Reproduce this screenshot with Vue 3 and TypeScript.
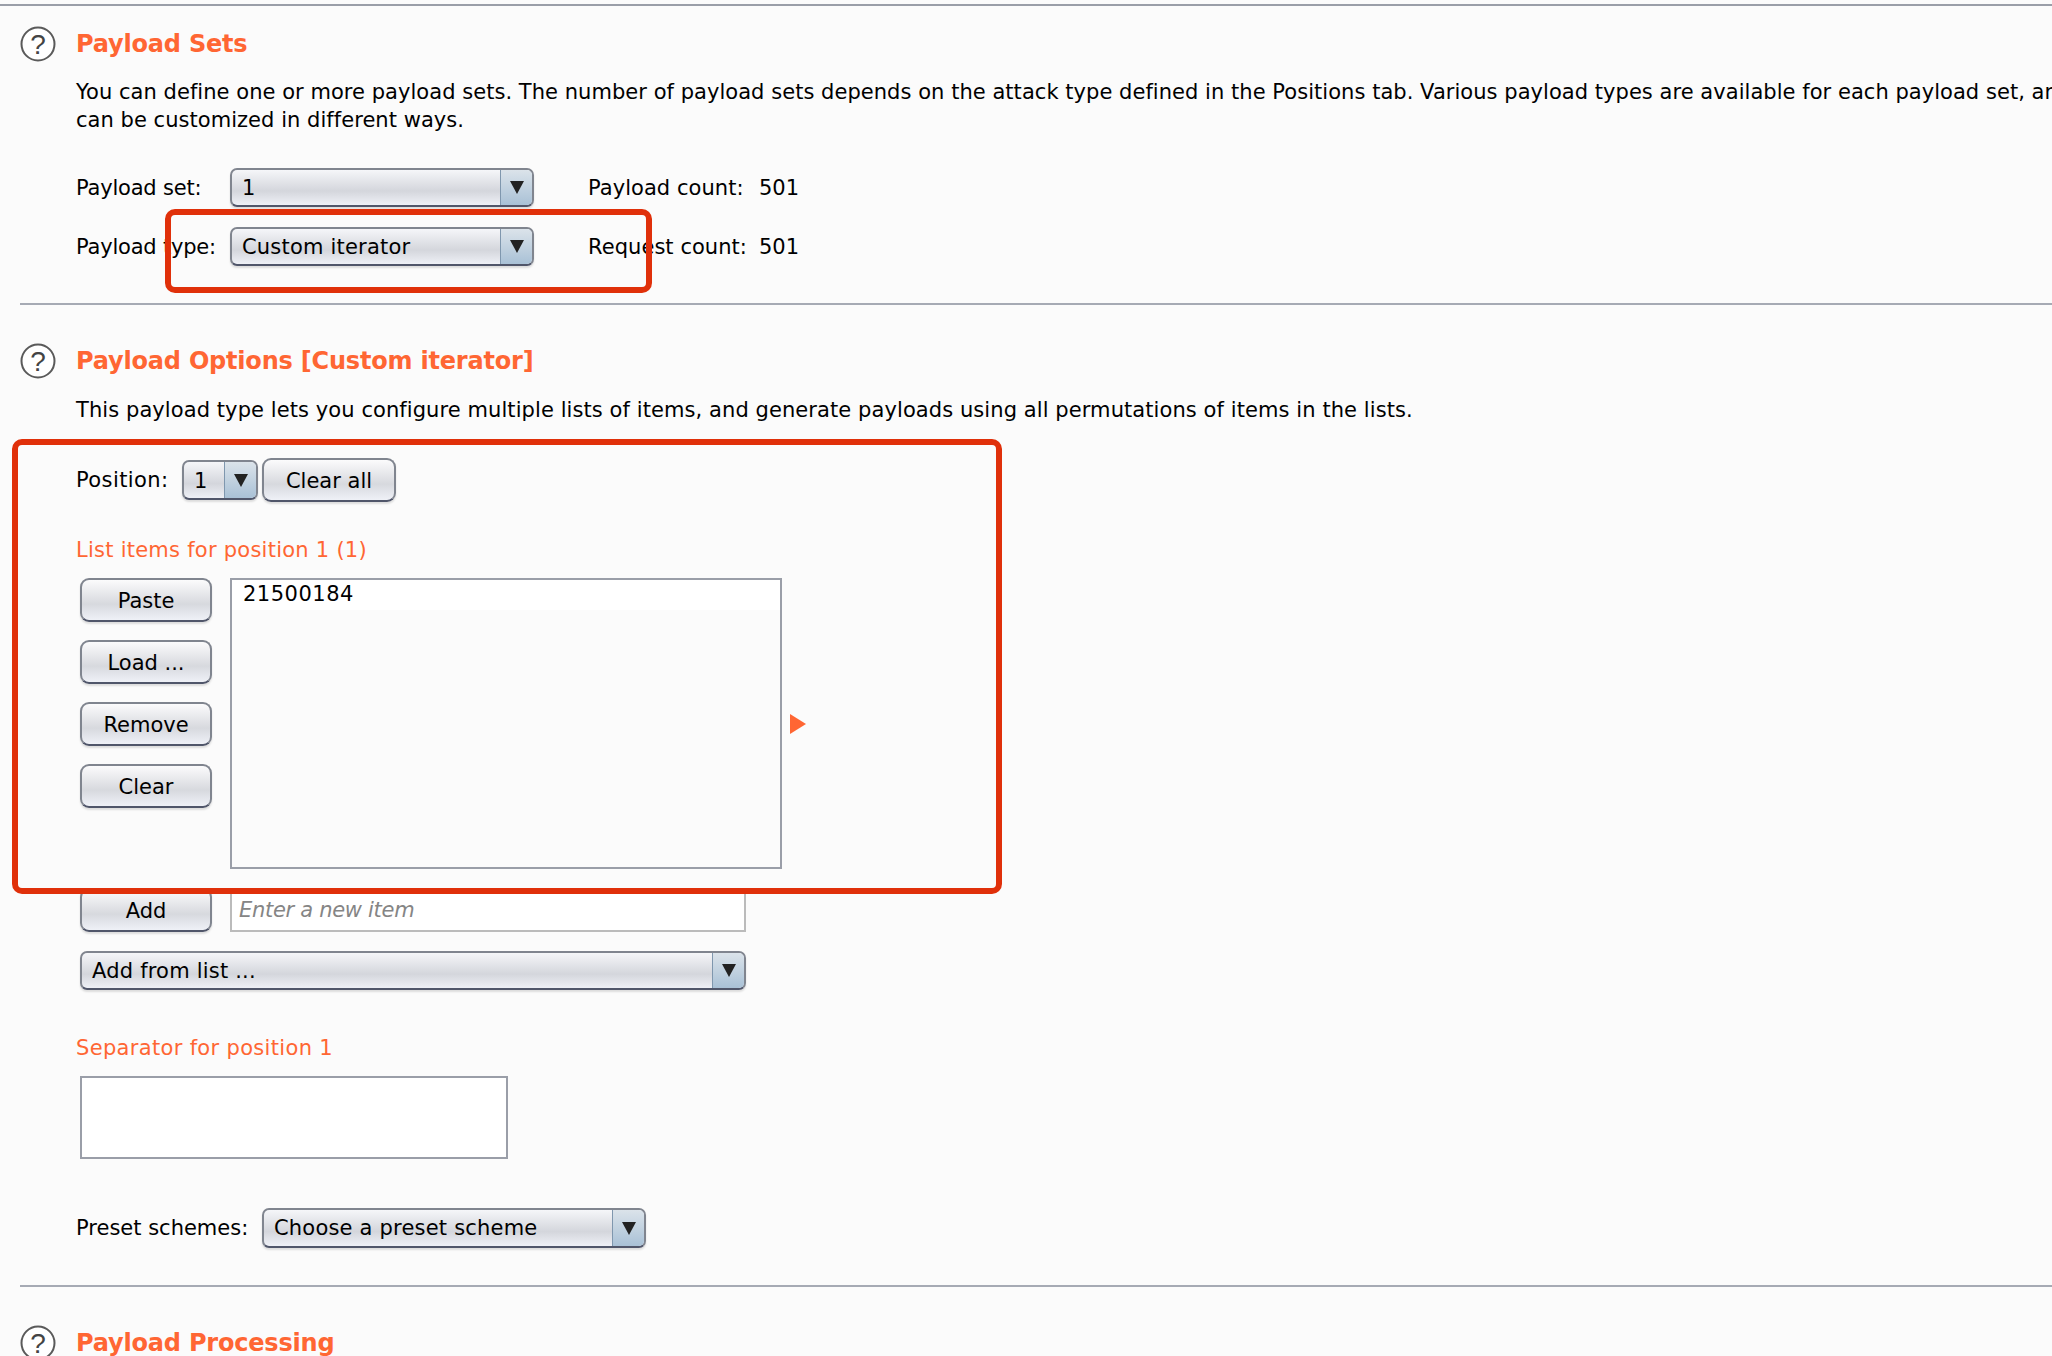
<template>
  <div class="page">
    <div class="rule-top"></div>

    <section class="section first">
      <div class="head">
        <svg class="help" viewBox="0 0 36 36" width="36" height="36">
          <circle cx="18" cy="18" r="16.5" fill="#fff" stroke="#5a5a5a" stroke-width="2" />
          <text x="18" y="28" text-anchor="middle" class="qmark">?</text>
        </svg>
        <h2>Payload Sets</h2>
      </div>
      <div class="body">
        <p class="para wide">
          You can define one or more payload sets. The number of payload sets depends on the attack type defined in the Positions tab. Various payload types are available for each payload set, and each payload type<br />can be customized in different ways.
        </p>
        <div class="form-row row-one">
          <label class="set-label">Payload set:</label>
          <div class="combo set-combo"><span class="combo-text">1</span><span class="combo-arrow"><i></i></span></div>
          <span class="count">Payload count:</span><span>501</span>
        </div>
        <div class="form-row row-two">
          <label class="set-label">Payload type:</label>
          <div class="combo set-combo"><span class="combo-text">Custom iterator</span><span class="combo-arrow"><i></i></span></div>
          <span class="count">Request count:</span><span>501</span>
        </div>
      </div>
    </section>

    <section class="section">
      <div class="head">
        <svg class="help" viewBox="0 0 36 36" width="36" height="36">
          <circle cx="18" cy="18" r="16.5" fill="#fff" stroke="#5a5a5a" stroke-width="2" />
          <text x="18" y="28" text-anchor="middle" class="qmark">?</text>
        </svg>
        <h2>Payload Options [Custom iterator]</h2>
      </div>
      <div class="body">
        <p class="para single">This payload type lets you configure multiple lists of items, and generate payloads using all permutations of items in the lists.</p>

        <div class="position-row">
          <label class="pos-label">Position:</label>
          <div class="combo pos-combo"><span class="combo-text">1</span><span class="combo-arrow"><i></i></span></div>
          <button class="btn clear-all">Clear all</button>
        </div>

        <h3 class="sub list-head">List items for position 1 (1)</h3>
        <div class="list-area">
          <div class="list-buttons">
            <button v-for="label in listActions" :key="label" class="btn side-btn">{{ label }}</button>
          </div>
          <div class="listbox">
            <div v-for="item in items" :key="item" class="list-item">{{ item }}</div>
          </div>
          <svg class="expand" viewBox="0 0 16 20" width="16" height="20"><path d="M0 0 L16 10 L0 20 Z" fill="#ff6633" /></svg>
        </div>

        <div class="add-row">
          <button class="btn side-btn">Add</button>
          <input class="new-item" placeholder="Enter a new item" />
        </div>
        <div class="combo from-list"><span class="combo-text">Add from list ...</span><span class="combo-arrow"><i></i></span></div>

        <h3 class="sub sep-head">Separator for position 1</h3>
        <div class="sep-box"></div>

        <div class="preset-row">
          <label class="preset-label">Preset schemes:</label>
          <div class="combo preset-combo"><span class="combo-text">Choose a preset scheme</span><span class="combo-arrow"><i></i></span></div>
        </div>
      </div>
    </section>

    <section class="section">
      <div class="head">
        <svg class="help" viewBox="0 0 36 36" width="36" height="36">
          <circle cx="18" cy="18" r="16.5" fill="#fff" stroke="#5a5a5a" stroke-width="2" />
          <text x="18" y="28" text-anchor="middle" class="qmark">?</text>
        </svg>
        <h2>Payload Processing</h2>
      </div>
    </section>

    <!-- annotation boxes drawn over the screenshot -->
    <div class="mark mark-type"></div>
    <div class="mark mark-options"></div>
  </div>
</template>

<script setup lang="ts">
const listActions = ['Paste', 'Load ...', 'Remove', 'Clear'];
const items = ['21500184'];
</script>

<style>
html,
body {
  margin: 0;
  background: #fbfbfb;
  overflow: hidden;
}
</style>

<style scoped>
.page {
  position: relative;
  width: 2052px;
  height: 1356px;
  overflow: hidden;
  box-sizing: border-box;
  padding-top: 4px;
  background: #fbfbfb;
  color: #000;
  font-family: "DejaVu Sans", sans-serif;
  font-size: 21px;
  line-height: 28px;
}

.rule-top {
  height: 2px;
  background: #9a9ea8;
}

.section {
  margin-left: 20px;
  border-top: 2px solid #a6aab4;
  margin-top: 37px;
  padding-top: 38px;
}

.section.first {
  border-top: 0;
  margin-top: 0;
  padding-top: 20px;
}

.head {
  display: flex;
  align-items: center;
  gap: 20px;
  height: 36px;
}

.help {
  flex: none;
}

.qmark {
  font-family: "Liberation Sans", sans-serif;
  font-size: 28px;
  fill: #444;
}

h2 {
  margin: 0;
  color: #ff6633;
  font-size: 24px;
  font-weight: 700;
  letter-spacing: -0.2px;
  line-height: 36px;
  white-space: nowrap;
}

.body {
  padding-left: 56px;
}

.para {
  margin: 16px 0 0;
  letter-spacing: 0.08px;
  white-space: nowrap;
}

.para.wide {
  letter-spacing: 0.04px;
}

.para.single {
  margin-top: 17px;
}

.form-row {
  display: flex;
  align-items: center;
  height: 39px;
  white-space: nowrap;
}

.row-one {
  margin-top: 34px;
}

.row-two {
  margin-top: 20px;
}

.set-label {
  width: 154px;
  letter-spacing: -0.2px;
}

.count {
  margin-left: 54px;
  width: 171px;
  letter-spacing: 0.05px;
}

.combo {
  display: flex;
  box-sizing: border-box;
  height: 39px;
  border: 2px solid #80858f;
  border-bottom-color: #50566a;
  border-radius: 7px;
  overflow: hidden;
  background: linear-gradient(#f5f6f9, #d4d6dc 60%, #eef0f6);
  box-shadow: 0 2px 2px rgba(0, 0, 0, 0.12);
}

.combo-text {
  flex: 1;
  padding-left: 10px;
  letter-spacing: 0.2px;
  line-height: 37px;
  white-space: nowrap;
}

.combo-arrow {
  flex: none;
  display: flex;
  align-items: center;
  justify-content: center;
  width: 31px;
  border-left: 1px solid #7f97ae;
  background: linear-gradient(#dbe3ea, #a9c1d6);
}

.combo-arrow i {
  width: 0;
  height: 0;
  border-left: 7px solid transparent;
  border-right: 7px solid transparent;
  border-top: 13px solid #222;
}

.set-combo {
  width: 304px;
}

.position-row {
  display: flex;
  align-items: center;
  height: 44px;
  margin-top: 34px;
}

.pos-label {
  width: 106px;
  letter-spacing: 0.4px;
}

.pos-combo {
  width: 76px;
  height: 40px;
}

.pos-combo .combo-text {
  line-height: 38px;
}

.btn {
  box-sizing: border-box;
  padding: 1px 0 0;
  border: 2px solid #80858f;
  border-bottom-color: #50566a;
  border-radius: 9px;
  background: linear-gradient(#fbfbfc, #d7d9de 60%, #eff1f7);
  box-shadow: 0 2px 2px rgba(0, 0, 0, 0.12);
  color: #000;
  font: inherit;
}

.clear-all {
  width: 134px;
  height: 44px;
  margin-left: 4px;
}

.sub {
  margin: 0;
  color: #ff6633;
  font-size: 21px;
  font-weight: 400;
  letter-spacing: 0.25px;
  line-height: 28px;
}

.list-head {
  margin-top: 34px;
}

.list-area {
  display: flex;
  align-items: center;
  margin-top: 14px;
  margin-left: 4px;
}

.list-buttons {
  align-self: flex-start;
  display: flex;
  flex-direction: column;
  gap: 18px;
  width: 132px;
}

.side-btn {
  width: 132px;
  height: 44px;
}

.listbox {
  box-sizing: border-box;
  width: 552px;
  height: 291px;
  margin-left: 18px;
  border: 2px solid #9a9ea8;
  background: #fbfbfb;
}

.list-item {
  height: 30px;
  padding-left: 11px;
  background: #fff;
  letter-spacing: 0.5px;
  line-height: 28px;
}

.expand {
  margin-left: 8px;
}

.add-row {
  display: flex;
  gap: 18px;
  margin-top: 19px;
  margin-left: 4px;
}

.new-item {
  box-sizing: border-box;
  width: 516px;
  height: 44px;
  padding: 0 7px;
  border: 2px solid #bbbbbb;
  border-radius: 0;
  outline: none;
  background: #fff;
  font: inherit;
}

.new-item::placeholder {
  color: #858585;
  font-style: italic;
  letter-spacing: -0.3px;
  opacity: 1;
}

.from-list {
  width: 666px;
  margin-top: 19px;
  margin-left: 4px;
}

.sep-head {
  margin-top: 44px;
  letter-spacing: 0.33px;
}

.sep-box {
  box-sizing: border-box;
  width: 428px;
  height: 83px;
  margin-top: 14px;
  margin-left: 4px;
  border: 2px solid #9a9ea8;
  background: #fff;
}

.preset-row {
  display: flex;
  align-items: center;
  height: 40px;
  margin-top: 49px;
}

.preset-label {
  width: 186px;
}

.preset-combo {
  width: 384px;
  height: 40px;
}

/* red annotation rectangles */
.mark {
  position: absolute;
  box-sizing: border-box;
  border: 6px solid #e0300a;
  border-radius: 10px;
  pointer-events: none;
}

.mark-type {
  left: 165px;
  top: 209px;
  width: 487px;
  height: 84px;
}

.mark-options {
  left: 12px;
  top: 439px;
  width: 990px;
  height: 455px;
}
</style>
